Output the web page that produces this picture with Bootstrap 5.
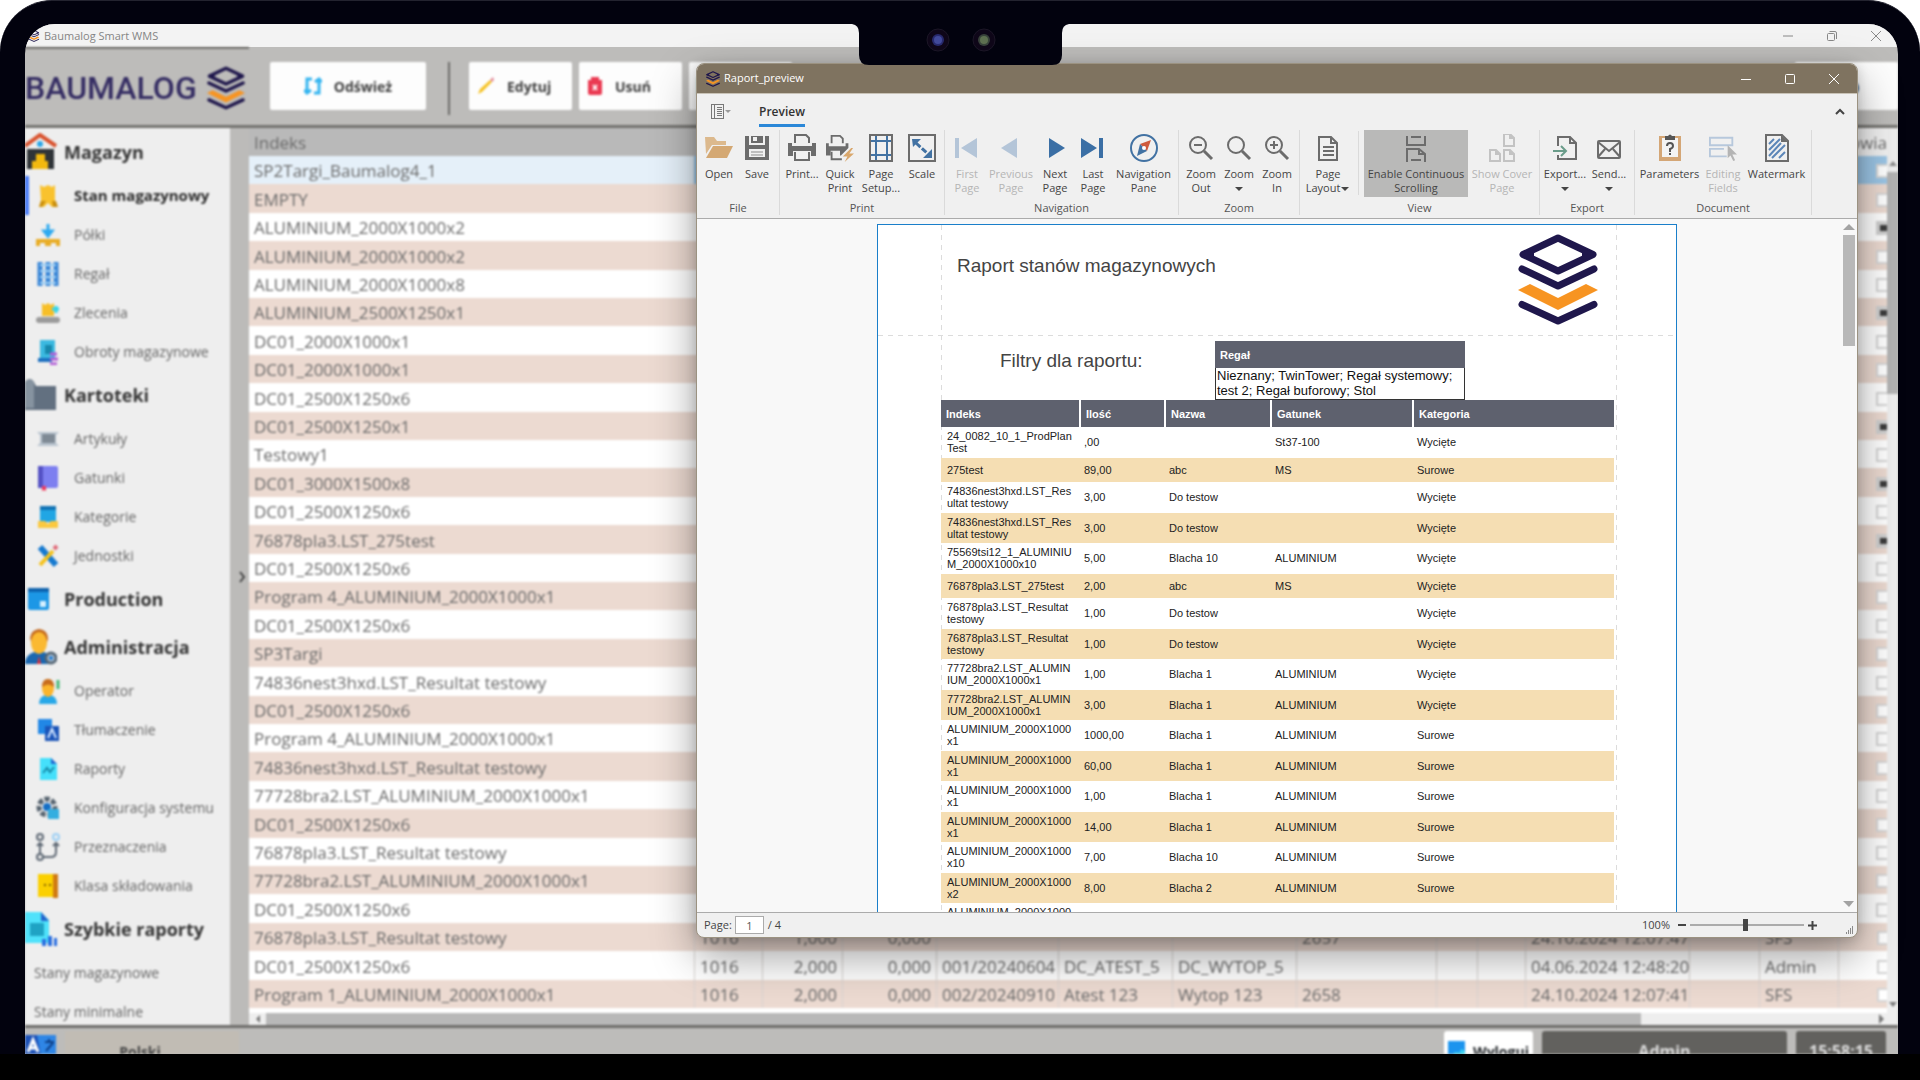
<!DOCTYPE html>
<html lang="pl">
<head>
<meta charset="utf-8">
<meta name="viewport" content="width=device-width, initial-scale=1">
<title>Baumalog Smart WMS</title>
<link href="https://cdn.jsdelivr.net/npm/bootstrap@5.3.0/dist/css/bootstrap.min.css" rel="stylesheet">
<style>
  :root { --ui: "Open Sans", "Noto Sans", sans-serif; --doc: "Liberation Sans", Arial, sans-serif; }
  body { font-family: var(--ui); background: #fff; }
  button { font-family: inherit; }
  svg { display: block; flex: none; }

  /* laptop frame */
  .device { background: #02020e; border-top: 1px solid #23232f; border-radius: 52px 52px 0 0; padding: 23px 22px 0 25px; min-height: 0; }
  .screen { background: #bdbcba; border-radius: 30px 30px 0 0; min-height: 0; }
  .deck { height: 26px; background: #000; }
  .notch { position: absolute; top: 20px; left: 852px; z-index: 20; }

  /* main application */
  .app-title { height: 23px; background: #f3f3f3; padding: 0 12px 0 3px; font-size: 11px; line-height: 23px; color: #858585; }
  .plain-btn { background: none; border: 0; padding: 0; color: inherit; }
  .app-body { filter: blur(1px); min-height: 0; color: #6b6b6b; }
  .app-head { height: 81px; padding: 15px 0; border-bottom: 3px solid #747370; }
  .brand-block { width: 224px; height: 79px; border-top: 2px solid #747370; margin-top: -15px; margin-right: 21px; gap: 10px; }
  .brand-word { font-family: Roboto, sans-serif; font-size: 32px; line-height: 40px; color: #352d63; font-weight: 500; }
  .tool-btn { background: #fdfdfd; border: 0; border-radius: 2px; height: 48px; width: 103px; color: #3d3d3d; font-size: 14px; font-weight: 700; margin-right: 7px; gap: 12px; }
  .tool-wide { width: 156px; margin-right: 22px; }
  .tool-rule { width: 2px; height: 53px; background: #6d6c6a; margin-right: 19px; }

  .side { width: 205px; background: #eee; flex: none; overflow: hidden; }
  .side-head { height: 48px; font-size: 18px; font-weight: 700; color: #353535; gap: 7px; }
  .side-link { height: 39px; padding-left: 11px; gap: 14px; font-size: 14px; color: #666; text-decoration: none; }
  .side-link.plain { padding-left: 9px; }
  .side-link.active { font-size: 15px; font-weight: 700; color: #2b2b2b; border-left: 4px solid #4a7dfa; padding-left: 7px; }
  .side a, .side-head { white-space: nowrap; }
  .splitter { width: 19px; background: #bcbbb9; flex: none; }

  .stock { table-layout: fixed; width: 100%; border-collapse: separate; border-spacing: 0; font-size: 17px; line-height: 26px; background: #fff; }
  .stock th, .stock td { padding: 2px 5px 0; white-space: nowrap; overflow: hidden; height: 28px; }
  .stock th { background: #b9b9b9; font-weight: 400; padding-top: 1px; }
  .stock tbody tr:nth-child(5n+2) td, .stock tbody tr:nth-child(5n+4) td { height: 29px; }
  .stock tbody tr:nth-child(even) td { background: #ecdad1; }
  .stock tbody tr:first-child td { background: #9cc6e6; }
  .stock tbody tr:first-child td:first-child { background: #e5f0f9; }
  .stock .lined td { border-left: 1px solid #d9d4d1; }
  .stock .lined td:first-child { border-left: 0; }
  .stock td.num { text-align: right; }
  .stock th.edge { background: #f1f1f1; text-align: right; padding-right: 0; }
  .stock td:last-child { padding-left: 38px; padding-right: 0; }
  .tick { appearance: none; width: 14px; height: 14px; border: 2px solid #d5d5d5; background: #fff; display: block; margin: 0; }
  .tick:checked { background: #3c3c3c; border: 4px solid #cfcfcf; border-right-width: 1px; }
  .vbar { width: 11px; background: #eee; flex: none; padding-top: 28px; }
  .vbar-thumb { height: 222px; background: #b3b3b3; }
  .hbar { height: 12px; background: #eee; margin-top: auto; }
  .hbar-thumb { background: #b8b8b8; width: 1375px; }
  .app-foot { height: 29px; border-top: 3px solid #6f6e6c; font-size: 14px; font-weight: 700; flex: none; overflow: hidden; gap: 9px; padding: 3px 12px 0 0; }
  .lang-pick { width: 174px; height: 40px; background: #c1bcb4; border: 0; color: #444; font-weight: 700; text-align: center; appearance: none; }
  .foot-tile { height: 40px; border: 0; border-radius: 3px; background: #62615e; color: #dcdcdc; font-weight: 700; font-size: 16px; }

  /* report preview window */
  .preview-win { position: absolute; left: 696px; right: 62px; top: 63px; bottom: 142px; z-index: 10; border: 1px solid #9b9281; border-radius: 8px; background: #f0f0f0; overflow: hidden; box-shadow: 0 18px 44px rgba(0,0,0,.38), 0 2px 12px rgba(0,0,0,.16); color: #454545; font-size: 11px; }
  .win-title { height: 30px; background: #7f7360; color: #fff; font-size: 11px; border-bottom: 1px solid #c8c2b6; padding: 0 17px 0 9px; }
  .win-tabs { height: 35px; padding: 0 12px 0 14px; }
  .tab-on { color: #333; font-size: 12px; font-weight: 600; line-height: 24px; border: 0; border-bottom: 3px solid #2b88d8; background: none; padding: 0; height: 27px; }
  .ribbon { height: 90px; border-bottom: 1px solid #ababab; }
  .r-group { border-right: 1px solid #dadada; height: 85px; padding: 0 3px; margin-top: 1px; }
  .r-name { line-height: 14px; margin-top: 4px; color: #555; }
  .r-btn { background: none; border: 0; padding: 4px 0 0; height: 67px; line-height: 14px; color: #454545; font-size: 11px; white-space: nowrap; display: flex; flex-direction: column; align-items: center; gap: 5px; }
  .r-btn svg.big { width: 28px; height: 28px; }
  .r-btn:disabled { color: #b5b5b5; }
  .r-btn.on { background: #b9b9b8; }
  .w-a { width: 38px; } .w-b { width: 44px; } .w-c { width: 50px; } .w-d { width: 63px; } .w-e { width: 68px; } .w-f { width: 104px; }
  .r-rule { width: 1px; height: 64px; background: #dadada; margin: 1px 5px 0; }
  .caret { display: inline-block; border: 4px solid transparent; border-top: 4px solid #454545; border-bottom: 0; vertical-align: middle; margin: 0 1px; }

  .canvas { background: #f8f8f8; padding-left: 14px; padding-top: 5px; min-height: 0; overflow: hidden; }
  .sheet { width: 800px; border: 1px solid #1a7fca; border-bottom: 0; font-family: var(--doc); color: #222; overflow: hidden; height: 100%;
    background:
      repeating-linear-gradient(180deg, #dcdcdc 0 5px, transparent 5px 10px) 63px 0 / 1px 100% no-repeat,
      repeating-linear-gradient(180deg, #dcdcdc 0 5px, transparent 5px 10px) 738px 0 / 1px 100% no-repeat,
      repeating-linear-gradient(90deg, #dcdcdc 0 5px, transparent 5px 10px) 0 110px / 100% 1px no-repeat #fff; }
  .sheet-head { height: 111px; padding: 9px 78px 0 79px; }
  .doc-title { font-size: 19px; line-height: 24px; margin: 0; font-weight: 400; color: #444; }
  .sheet-head .doc-title { padding-top: 20px; }
  .sheet-filter { padding: 5px 211px 0 122px; height: 64px; }
  .f-box { width: 250px; height: 59px; border: 1px solid #333; border-top: 0; font-size: 13px; color: #111; }
  .f-head { background: #5e616e; color: #fff; font-weight: 700; font-size: 11px; line-height: 28px; height: 27px; margin: 0 -1px; padding-left: 5px; }
  .f-box p { margin: 0; padding: 0 1px; line-height: 15px; white-space: nowrap; }
  .report { table-layout: fixed; width: 673px; margin-left: 63px; border-collapse: separate; border-spacing: 0; font-size: 11px; line-height: 12px; }
  .report th { background: #5e616e; color: #fff; height: 27px; padding: 0 5px; border-right: 2px solid #fff; }
  .report th:last-child { border-right: 0; }
  .report td { padding: 0 3px 1px; height: 31px; white-space: nowrap; }
  .report td:first-child { padding-left: 6px; }
  .report tbody tr:nth-child(even) td { height: 30px; background: #f5deb3; }
  .report tbody tr.slim td { height: 24px; }
  .canvas-bar { width: 14px; padding-right: 2px; }
  .canvas-thumb { height: 111px; background: #b8b8b8; }
  .status { height: 25px; border-top: 1px solid #ababab; padding: 0 3px 0 7px; font-size: 11px; flex: none; }
  .page-no { width: 29px; height: 18px; border: 1px solid #ababab; font-size: 11px; text-align: center; padding: 0; color: #555; margin: 0 4px 0 3px; }
  .zoomer { appearance: none; width: 114px; height: 14px; background: linear-gradient(#ababab, #ababab) center / 100% 2px no-repeat; margin: 0 4px; }
  .zoomer::-webkit-slider-thumb { appearance: none; width: 5px; height: 12px; background: #454545; }
</style>
<script src="https://cdn.jsdelivr.net/npm/bootstrap@5.3.0/dist/js/bootstrap.bundle.min.js"></script>
</head>
<body class="vh-100 overflow-hidden d-flex flex-column position-relative">

<svg width="0" height="0" class="position-absolute" aria-hidden="true">
  <symbol id="stack" viewBox="0 0 80 91">
    <g fill="none" stroke="#1f174c" stroke-width="7" stroke-linecap="round" stroke-linejoin="round">
      <path d="M40 4 75 20.500 40 37 5 20.500Z"/><path d="M4 35 40 52 76 35M4 70.500 40 87 76 70.500"/>
      <path d="M5 20.500 14 17V24ZM75 20.500 66 17V24Z" stroke-width="4"/>
    </g>
    <path fill="#f79422" d="M0 56 12 50 40 64 68 50 80 56 40 76Z"/>
  </symbol>
</svg>

<div class="device flex-fill d-flex flex-column">
  <div class="screen flex-fill d-flex flex-column overflow-hidden">

    <header class="app-title d-flex align-items-center">
      <svg width="12" height="12"><use href="#stack"/></svg>
      <span class="ms-1">Baumalog Smart WMS</span>
      <div class="ms-auto d-flex align-items-center gap-4 pe-1">
        <button class="plain-btn me-2" aria-label="Minimalizuj"><svg width="12" height="12"><path d="M1 6h10" stroke="#888"/></svg></button>
        <button class="plain-btn me-2" aria-label="Przywróć"><svg width="12" height="12" fill="none" stroke="#888"><rect x="1.500" y="3.500" width="7" height="7" rx="1"/><path d="M3.500 1.500H9q1.500 0 1.500 1.500v6"/></svg></button>
        <button class="plain-btn" aria-label="Zamknij"><svg width="12" height="12"><path d="M1 1l10 10M11 1 1 11" stroke="#888"/></svg></button>
      </div>
    </header>

    <div class="app-body flex-fill d-flex flex-column">
      <div class="app-head d-flex flex-shrink-0">
        <div class="brand-block d-flex align-items-center flex-shrink-0">
          <span class="brand-word">BAUMALOG</span>
          <svg width="38" height="44"><use href="#stack"/></svg>
        </div>
        <button class="tool-btn tool-wide d-flex align-items-center justify-content-center"><svg width="18" height="18" fill="none" stroke="#35b5f0" stroke-width="3"><path d="M8 2H3v13M10 16h5V3M0 13l3 3 4-3M11 5l4-3 3 3"/></svg>Odśwież</button>
        <div class="tool-rule"></div>
        <button class="tool-btn d-flex align-items-center ps-2"><svg width="18" height="20"><path d="M1 18 3 13 13 4l2 2L5 16Z" fill="#f6c325"/><path d="M13 4 16 1l1 3-2 2Z" fill="#e48a9a"/></svg>Edytuj</button>
        <button class="tool-btn d-flex align-items-center ps-2"><svg width="16" height="20"><path d="M1 4h14v13q0 2-2 2H3q-2 0-2-2ZM4 1h8v3H4Z" fill="#ea3a52"/><path d="M6 9l4 5M10 9l-4 5" stroke="#fff" stroke-width="2"/></svg>Usuń</button>
        <button class="tool-btn d-flex align-items-center ps-2" aria-label="Eksport"><svg width="18" height="20"><rect width="18" height="20" rx="3" fill="#3aa66a"/></svg></button>
        <button class="tool-btn ms-auto me-0 d-flex align-items-center justify-content-center" aria-label="Widok"><svg width="28" height="20"><circle cx="19" cy="12" r="7" fill="#3f5f80"/></svg></button>
      </div>

      <div class="flex-fill d-flex overflow-hidden">
        <nav class="side">
          <div class="side-head d-flex align-items-center"><svg width="32" height="38" viewBox="0 0 32 38"><path d="M0 13 15 2l16 11" fill="none" stroke="#d9532f" stroke-width="4"/><path d="M2 16h27v20H2Z" fill="#2f3438"/><circle cx="15" cy="11" r="3" fill="#2aa6e8"/><path d="M11 21h9v7h3v8H7v-8h4Z" fill="#f2b90f"/></svg>Magazyn</div>
          <a href="#" class="side-link active d-flex align-items-center"><svg width="24" height="24"><path d="M4 1l4 2 4-2 4 2 3-2v15l2 7h-5l-4-4-4 4H3l2-7Z" fill="#f9c22e"/><path d="M5 17h5l-4 6H3ZM16 17h4l2 6h-5Z" fill="#c98f10"/></svg>Stan magazynowy</a>
          <a href="#" class="side-link d-flex align-items-center"><svg width="24" height="24"><path d="M12 1v9M8 8l4 5 4-5Z" stroke="#2eaaf0" stroke-width="3" fill="#2eaaf0"/><path d="M0 16h24v7h-4v-3h-5v3H9v-3H4v3H0Z" fill="#e9ad25"/></svg>Półki</a>
          <a href="#" class="side-link d-flex align-items-center"><svg width="24" height="24"><path d="M4 0v24M12 0v24M20 0v24" stroke="#3a86d6" stroke-width="5"/><path d="M4 3h16M4 9h16M4 15h16M4 21h16" stroke="#9fd0f5" stroke-width="2"/></svg>Regał</a>
          <a href="#" class="side-link d-flex align-items-center"><svg width="24" height="24"><path d="M6 2l3 2 3-2 3 2 3-2v13H6Z" fill="#f7bf28"/><path d="M16 8h7M20 5v7" stroke="#35d5ea" stroke-width="3"/><rect y="16" width="24" height="6" rx="3" fill="#9b9b9b"/></svg>Zlecenia</a>
          <a href="#" class="side-link d-flex align-items-center"><svg width="24" height="26"><path d="M4 1h15v20H4Z" fill="#3bb9e0"/><path d="M9 6h7v9H9Z" fill="#1788ac"/><path d="M2 19h14v4H2Z" fill="#1b6fc0"/><path d="M14 15h7M14 20h8M14 25h7" stroke="#b25bd6" stroke-width="3"/></svg>Obroty magazynowe</a>
          <div class="side-head d-flex align-items-center"><svg width="32" height="38" viewBox="0 0 32 38"><path d="M0 6q5-6 9 0l2 4h20v24H0Z" fill="#627080"/><path d="M0 6q5-6 9 0v26H0Z" fill="#8693a0"/></svg>Kartoteki</div>
          <a href="#" class="side-link d-flex align-items-center"><svg width="24" height="24"><path d="M1 5h22l-3 3v8l3 3H1l3-3V8Z" fill="#b9c4cf"/><rect x="6" y="7" width="13" height="9" fill="#7f8a95"/></svg>Artykuły</a>
          <a href="#" class="side-link d-flex align-items-center"><svg width="24" height="26"><rect x="2" y="1" width="20" height="22" rx="2" fill="#7d7ff0"/><rect x="2" y="1" width="5" height="22" fill="#5451c4"/><path d="M6 21h4v5l-2-1-2 1Z" fill="#ee3a5e"/></svg>Gatunki</a>
          <a href="#" class="side-link d-flex align-items-center"><svg width="24" height="24"><path d="M4 1h16v16H4Z" fill="#21a6e4"/><path d="M4 1h16v4H4Z" fill="#1173b5"/><path d="M2 16h7l3 3 3-3h7v7H2Z" fill="#fbc93f"/></svg>Kategorie</a>
          <a href="#" class="side-link d-flex align-items-center"><svg width="24" height="24"><path d="M4 3l16 18" stroke="#167ad0" stroke-width="6"/><path d="M4 21 17 7" stroke="#f5c21c" stroke-width="4"/><path d="M18 5l3-3" stroke="#e06a78" stroke-width="4"/></svg>Jednostki</a>
          <div class="side-head d-flex align-items-center"><svg width="32" height="26" viewBox="0 0 32 26"><rect x="3" y="2" width="21" height="22" rx="2" fill="#1c97e6"/><path d="M3 2h21v4H3Z" fill="#0d62ae"/><rect x="15" y="15" width="6" height="6" fill="#d6f0ff"/></svg>Production</div>
          <div class="side-head d-flex align-items-center"><svg width="32" height="38" viewBox="0 0 32 38"><path d="M0 36q0-11 14-13 12 1 14 13Z" fill="#1a67b0"/><path d="M5 10Q6 2 14 1q9 1 9 10l-2 6H7Z" fill="#c4691d"/><ellipse cx="14" cy="15" rx="8" ry="11" fill="#fbb930"/><path d="M14 28l2 8h-4Z" fill="#e0303a"/><circle cx="26" cy="30" r="5" fill="#b8c9da" stroke="#556675" stroke-width="3"/><circle cx="26" cy="30" r="2" fill="#1a77d0"/></svg>Administracja</div>
          <a href="#" class="side-link d-flex align-items-center"><svg width="24" height="26"><path d="M3 26q0-9 9-9t9 9Z" fill="#28a8e8"/><ellipse cx="12" cy="10" rx="6" ry="9" fill="#fbb52c"/><path d="M6 9q0-8 6-8t6 8q-6-5-12 0Z" fill="#c76c1d"/><path d="M22 2v9" stroke="#48b978" stroke-width="3"/></svg>Operator</a>
          <a href="#" class="side-link d-flex align-items-center"><svg width="24" height="24"><rect x="2" y="1" width="14" height="15" fill="#2187e6"/><rect x="9" y="8" width="14" height="15" fill="#1a54b8"/><path d="M12 20l4-9 4 9" stroke="#cfe4ff" stroke-width="2" fill="none"/></svg>Tłumaczenie</a>
          <a href="#" class="side-link d-flex align-items-center"><svg width="24" height="24"><path d="M4 1h11l6 6v16H4Z" fill="#45e0fb"/><path d="M15 1l6 6h-6Z" fill="#1f66d0"/><path d="M7 16l4-5 3 4 4-5" stroke="#178aa8" stroke-width="2" fill="none"/></svg>Raporty</a>
          <a href="#" class="side-link d-flex align-items-center"><svg width="24" height="24"><circle cx="11" cy="11" r="8" fill="none" stroke="#56636f" stroke-width="5" stroke-dasharray="5 2"/><circle cx="11" cy="11" r="4" fill="#156ec4"/><rect x="12" y="13" width="11" height="10" fill="#33aee0"/></svg>Konfiguracja systemu</a>
          <a href="#" class="side-link d-flex align-items-center"><svg width="24" height="28" fill="none" stroke="#5f6975" stroke-width="2"><circle cx="4" cy="4" r="3"/><circle cx="20" cy="4" r="3" stroke="#9ccff5"/><circle cx="4" cy="24" r="3"/><path d="M4 21V10M1 13l3-3 3 3M7 24h8q5 0 5-5v-9M17 13l3-3 3 3"/></svg>Przeznaczenia</a>
          <a href="#" class="side-link d-flex align-items-center"><svg width="24" height="24"><rect x="2" width="15" height="23" fill="#fbd000"/><path d="M17 0h5v24h-5Z" fill="#d07a12"/><path d="M8 11h2M13 11h2" stroke="#7a5a00" stroke-width="2"/></svg>Klasa składowania</a>
          <div class="side-head d-flex align-items-center"><svg width="32" height="36" viewBox="0 0 32 36"><path d="M0 1h16l8 8v23H0Z" fill="#4fe2fb"/><path d="M16 1l8 9h-8Z" fill="#2264cc"/><path d="M5 12h14v13H5Z" fill="#1fa3c4"/><path d="M19 35v-7M25 35V25M31 35v-8" stroke="#2b6fe0" stroke-width="4"/></svg>Szybkie raporty</div>
          <a href="#" class="side-link plain d-flex align-items-center">Stany magazynowe</a>
          <a href="#" class="side-link plain d-flex align-items-center">Stany minimalne</a>
        </nav>
        <div class="splitter d-flex align-items-center justify-content-center"><svg width="8" height="12" class="ms-1"><path d="M2 1l4 5-4 5" fill="none" stroke="#444" stroke-width="2"/></svg></div>

        <div class="flex-fill d-flex flex-column overflow-hidden bg-white">
          <div class="d-flex flex-fill overflow-hidden">
            <div class="flex-fill overflow-hidden">
              <table class="stock">
                <colgroup><col><col style="width:68px"><col style="width:80px"><col style="width:94px"><col style="width:122px"><col style="width:114px"><col style="width:124px"><col style="width:140px"><col style="width:41px"><col style="width:48px"><col style="width:164px"><col style="width:70px"><col style="width:79px"><col style="width:49px"></colgroup>
                <thead><tr><th>Indeks</th><th colspan="12"></th><th class="edge">owia</th></tr></thead>
                <tbody>
                  <tr><td>SP2Targi_Baumalog4_1</td><td colspan="12"></td><td><input type="checkbox" class="tick" aria-label="Wiersz 1"></td></tr>
                  <tr><td>EMPTY</td><td colspan="12"></td><td><input type="checkbox" class="tick" aria-label="Wiersz 2"></td></tr>
                  <tr><td>ALUMINIUM_2000X1000x2</td><td colspan="12"></td><td><input type="checkbox" class="tick" checked aria-label="Wiersz 3"></td></tr>
                  <tr><td>ALUMINIUM_2000X1000x2</td><td colspan="12"></td><td><input type="checkbox" class="tick" aria-label="Wiersz 4"></td></tr>
                  <tr><td>ALUMINIUM_2000X1000x8</td><td colspan="12"></td><td><input type="checkbox" class="tick" aria-label="Wiersz 5"></td></tr>
                  <tr><td>ALUMINIUM_2500X1250x1</td><td colspan="12"></td><td><input type="checkbox" class="tick" checked aria-label="Wiersz 6"></td></tr>
                  <tr><td>DC01_2000X1000x1</td><td colspan="12"></td><td><input type="checkbox" class="tick" aria-label="Wiersz 7"></td></tr>
                  <tr><td>DC01_2000X1000x1</td><td colspan="12"></td><td><input type="checkbox" class="tick" aria-label="Wiersz 8"></td></tr>
                  <tr><td>DC01_2500X1250x6</td><td colspan="12"></td><td><input type="checkbox" class="tick" aria-label="Wiersz 9"></td></tr>
                  <tr><td>DC01_2500X1250x1</td><td colspan="12"></td><td><input type="checkbox" class="tick" checked aria-label="Wiersz 10"></td></tr>
                  <tr><td>Testowy1</td><td colspan="12"></td><td><input type="checkbox" class="tick" aria-label="Wiersz 11"></td></tr>
                  <tr><td>DC01_3000X1500x8</td><td colspan="12"></td><td><input type="checkbox" class="tick" checked aria-label="Wiersz 12"></td></tr>
                  <tr><td>DC01_2500X1250x6</td><td colspan="12"></td><td><input type="checkbox" class="tick" aria-label="Wiersz 13"></td></tr>
                  <tr><td>76878pla3.LST_275test</td><td colspan="12"></td><td><input type="checkbox" class="tick" checked aria-label="Wiersz 14"></td></tr>
                  <tr><td>DC01_2500X1250x6</td><td colspan="12"></td><td><input type="checkbox" class="tick" aria-label="Wiersz 15"></td></tr>
                  <tr><td>Program 4_ALUMINIUM_2000X1000x1</td><td colspan="12"></td><td><input type="checkbox" class="tick" aria-label="Wiersz 16"></td></tr>
                  <tr><td>DC01_2500X1250x6</td><td colspan="12"></td><td><input type="checkbox" class="tick" aria-label="Wiersz 17"></td></tr>
                  <tr><td>SP3Targi</td><td colspan="12"></td><td><input type="checkbox" class="tick" aria-label="Wiersz 18"></td></tr>
                  <tr><td>74836nest3hxd.LST_Resultat testowy</td><td colspan="12"></td><td><input type="checkbox" class="tick" aria-label="Wiersz 19"></td></tr>
                  <tr><td>DC01_2500X1250x6</td><td colspan="12"></td><td><input type="checkbox" class="tick" aria-label="Wiersz 20"></td></tr>
                  <tr><td>Program 4_ALUMINIUM_2000X1000x1</td><td colspan="12"></td><td><input type="checkbox" class="tick" aria-label="Wiersz 21"></td></tr>
                  <tr><td>74836nest3hxd.LST_Resultat testowy</td><td colspan="12"></td><td><input type="checkbox" class="tick" aria-label="Wiersz 22"></td></tr>
                  <tr><td>77728bra2.LST_ALUMINIUM_2000X1000x1</td><td colspan="12"></td><td><input type="checkbox" class="tick" aria-label="Wiersz 23"></td></tr>
                  <tr><td>DC01_2500X1250x6</td><td colspan="12"></td><td><input type="checkbox" class="tick" aria-label="Wiersz 24"></td></tr>
                  <tr><td>76878pla3.LST_Resultat testowy</td><td colspan="12"></td><td><input type="checkbox" class="tick" aria-label="Wiersz 25"></td></tr>
                  <tr><td>77728bra2.LST_ALUMINIUM_2000X1000x1</td><td colspan="12"></td><td><input type="checkbox" class="tick" aria-label="Wiersz 26"></td></tr>
                  <tr><td>DC01_2500X1250x6</td><td colspan="12"></td><td><input type="checkbox" class="tick" aria-label="Wiersz 27"></td></tr>
                  <tr class="lined"><td>76878pla3.LST_Resultat testowy</td><td>1016</td><td class="num">1,000</td><td class="num">0,000</td><td></td><td></td><td></td><td>2657</td><td></td><td></td><td>24.10.2024 12:07:47</td><td></td><td>SFS</td><td><input type="checkbox" class="tick" aria-label="Wiersz 28"></td></tr>
                  <tr class="lined"><td>DC01_2500X1250x6</td><td>1016</td><td class="num">2,000</td><td class="num">0,000</td><td>001/20240604</td><td>DC_ATEST_5</td><td>DC_WYTOP_5</td><td></td><td></td><td></td><td>04.06.2024 12:48:20</td><td></td><td>Admin</td><td><input type="checkbox" class="tick" aria-label="Wiersz 29"></td></tr>
                  <tr class="lined"><td>Program 1_ALUMINIUM_2000X1000x1</td><td>1016</td><td class="num">2,000</td><td class="num">0,000</td><td>002/20240910</td><td>Atest 123</td><td>Wytop 123</td><td>2658</td><td></td><td></td><td>24.10.2024 12:07:41</td><td></td><td>SFS</td><td><input type="checkbox" class="tick" aria-label="Wiersz 30"></td></tr>
                </tbody>
              </table>
            </div>
            <div class="vbar d-flex flex-column">
              <svg width="11" height="16"><path d="M2 10 6 5l4 5Z" fill="#888"/></svg>
              <div class="vbar-thumb"></div>
              <svg width="11" height="16" class="mt-auto"><path d="M2 5 6 10l4-5Z" fill="#777"/></svg>
            </div>
          </div>
          <div class="hbar d-flex flex-shrink-0">
            <svg width="17" height="12"><path d="M11 2 7 6l4 4Z" fill="#777"/></svg>
            <div class="hbar-thumb"></div>
            <svg width="24" height="12" class="ms-auto"><path d="M5 1l5 5-5 5Z" fill="#777"/></svg>
          </div>
        </div>
      </div>

      <footer class="app-foot d-flex">
        <svg width="31" height="32" class="mt-1"><rect width="31" height="32" fill="#2f86e6"/><path d="M0 0h12l6 32H0Z" fill="#1d52b8"/><path d="M3 17 8 5l5 12M5 13h6" fill="none" stroke="#fff" stroke-width="3"/><path d="M20 7h9M24 4v4M21 16l7-8" stroke="#0d3f87" stroke-width="2"/></svg>
        <select class="lang-pick flex-shrink-0 pe-4" aria-label="Język"><option>Polski</option></select>
        <button class="foot-tile ms-auto d-flex align-items-center justify-content-center gap-2 bg-white text-dark" style="width:89px"><svg width="17" height="20"><rect width="17" height="20" fill="#1c94ee"/><path d="M6 13h11M13 9l4 4-4 4" stroke="#3fdcf5" stroke-width="3" fill="none"/></svg><small>Wyloguj</small></button>
        <button class="foot-tile" style="width:245px">Admin</button>
        <div class="foot-tile d-flex align-items-center justify-content-center" style="width:90px">15:58:15</div>
      </footer>
    </div>
  </div>
</div>
<div class="deck"></div>

<svg class="notch" width="217" height="46" viewBox="0 0 217 46" aria-hidden="true">
  <path d="M0 4q7 1 7 9v22q0 10 10 10h183q10 0 10-10V13q0-8 7-9V0H0Z" fill="#02020e"/>
  <circle cx="86" cy="20" r="11" fill="#0e0618" stroke="#1b1626"/><circle cx="86" cy="20" r="6" fill="#27296c"/><circle cx="86" cy="20" r="4" fill="#41499a"/>
  <circle cx="132" cy="20" r="11" fill="#0e0618" stroke="#1b1626"/><circle cx="132" cy="20" r="6" fill="#37413a"/><circle cx="132" cy="20" r="4" fill="#5d6f50"/>
</svg>

<section class="preview-win d-flex flex-column" aria-label="Raport_preview">
  <div class="win-title d-flex align-items-center flex-shrink-0">
    <svg width="14" height="16"><use href="#stack"/></svg>
    <span class="ms-1">Raport_preview</span>
    <div class="ms-auto d-flex align-items-center gap-4">
      <button class="plain-btn me-2" aria-label="Minimize"><svg width="12" height="12"><path d="M1 6.500h10" stroke="#fff"/></svg></button>
      <button class="plain-btn me-2" aria-label="Maximize"><svg width="12" height="12"><rect x="1.500" y="1.500" width="9" height="9" rx="1" fill="none" stroke="#fff"/></svg></button>
      <button class="plain-btn" aria-label="Close"><svg width="12" height="12"><path d="M1 1l10 10M11 1 1 11" stroke="#fff"/></svg></button>
    </div>
  </div>

  <div class="win-tabs d-flex align-items-center flex-shrink-0">
    <button class="plain-btn me-4" aria-label="Menu"><svg width="20" height="15"><g fill="none" stroke="#777"><rect x=".5" y=".5" width="12" height="14"/><path d="M3.500 0v15M6 3.500h5M6 5.500h5M6 7.500h5M6 9.500h5M6 11.500h5"/></g><path d="M14 6h6l-3 3Z" fill="#999"/></svg></button>
    <button class="tab-on ms-1 mt-1">Preview</button>
    <button class="plain-btn ms-auto" aria-label="Zwiń"><svg width="10" height="7"><path d="M1 6l4-4 4 4" fill="none" stroke="#444" stroke-width="2"/></svg></button>
  </div>

  <div class="ribbon d-flex flex-shrink-0">
    <div class="r-group text-center">
      <div class="d-flex">
        <button class="r-btn w-a"><svg class="big" viewBox="0 0 28 28"><path d="M0 3h9l3 4h9v4H7L1 20Z" fill="#dcb98d"/><path d="M8 12h20l-6 12H1Z" fill="#d4a873"/></svg>Open</button>
        <button class="r-btn w-a"><svg class="big" viewBox="0 0 28 28"><path d="M2 2h4v9h16V2h4v24H2Zm4 13v8h16v-8Z" fill="#6c6c6c" fill-rule="evenodd"/><path d="M8 2h12v7H8Zm2 1v4h4V3Z" fill="#6c6c6c" fill-rule="evenodd"/><path d="M8 18h12M8 21h12" stroke="#8b8b8b"/></svg>Save</button>
      </div>
      <div class="r-name">File</div>
    </div>
    <div class="r-group text-center">
      <div class="d-flex">
        <button class="r-btn w-a"><svg class="big" viewBox="0 0 28 28"><path d="M7 9V1h11l3 3v5" fill="none" stroke="#6c6c6c" stroke-width="2"/><path d="M0 9h4v3h20V9h4v13h-5v-5H5v5H0Z" fill="#6c6c6c"/><path d="M7 18v8h14v-8" fill="none" stroke="#6c6c6c" stroke-width="2"/></svg>Print...</button>
        <button class="r-btn w-a"><svg class="big" viewBox="0 0 30 28"><path d="M6 9V1h9l3 3v5" fill="none" stroke="#6c6c6c" stroke-width="2"/><path d="M0 9h3v3h18V9h3v5l-8 8h-1v-5H5v5H0Z" fill="#6c6c6c"/><path d="M6 18v8h11" fill="none" stroke="#6c6c6c" stroke-width="2"/><path d="M27 14l-9 9h5l-3 6 10-9h-5l4-6Z" fill="#d9a76c"/></svg>Quick<br>Print</button>
        <button class="r-btn w-b"><svg class="big" viewBox="0 0 28 28"><path d="M9 2v24M20 2v24M3 7h22M3 21h22" stroke="#4272a3" stroke-width="2"/><rect x="3" y="1" width="22" height="26" fill="none" stroke="#6c6c6c" stroke-width="2"/></svg>Page<br>Setup...</button>
        <button class="r-btn w-a"><svg class="big" viewBox="0 0 28 28"><rect x="1" y="1" width="26" height="26" fill="none" stroke="#6c6c6c" stroke-width="2"/><path d="M4 5h9L5 13ZM24 24h-9l9-9Z" fill="#4272a3"/><path d="M8 9l12 11" stroke="#4272a3" stroke-width="3" stroke-dasharray="6 2"/></svg>Scale</button>
      </div>
      <div class="r-name">Print</div>
    </div>
    <div class="r-group text-center">
      <div class="d-flex">
        <button class="r-btn w-a" disabled><svg class="big" viewBox="0 0 28 28"><path d="M2 4h4v20H2ZM24 4v20L8 14Z" fill="#b4c5d8"/></svg>First<br>Page</button>
        <button class="r-btn w-c" disabled><svg class="big" viewBox="0 0 28 28"><path d="M20 4v20L4 14Z" fill="#b4c5d8"/></svg>Previous<br>Page</button>
        <button class="r-btn w-a"><svg class="big" viewBox="0 0 28 28"><path d="M8 4v20l16-10Z" fill="#3b6fa5"/></svg>Next<br>Page</button>
        <button class="r-btn w-a"><svg class="big" viewBox="0 0 28 28"><path d="M2 4v20l16-10ZM20 4h4v20h-4Z" fill="#3b6fa5"/></svg>Last<br>Page</button>
        <button class="r-btn w-d"><svg class="big" viewBox="0 0 28 28"><circle cx="14" cy="14" r="13" fill="none" stroke="#4272a3" stroke-width="2"/><path d="M21 6 17 17 10 10Z" fill="#cf5b3d"/><path d="M7 22 10 10 17 17Z" fill="#4272a3"/><circle cx="14" cy="14" r="2" fill="#fff"/></svg>Navigation<br>Pane</button>
      </div>
      <div class="r-name">Navigation</div>
    </div>
    <div class="r-group text-center">
      <div class="d-flex">
        <button class="r-btn w-a"><svg class="big" viewBox="0 0 28 28"><circle cx="11" cy="11" r="8" fill="none" stroke="#6c6c6c" stroke-width="2"/><path d="M7 11h8" stroke="#6c6c6c" stroke-width="2"/><path d="M17 17l8 8" stroke="#6c6c6c" stroke-width="3"/></svg>Zoom<br>Out</button>
        <button class="r-btn w-a"><svg class="big" viewBox="0 0 28 28"><circle cx="11" cy="11" r="8" fill="none" stroke="#6c6c6c" stroke-width="2"/><path d="M17 17l8 8" stroke="#6c6c6c" stroke-width="3"/></svg><span>Zoom<br><span class="caret"></span></span></button>
        <button class="r-btn w-a"><svg class="big" viewBox="0 0 28 28"><circle cx="11" cy="11" r="8" fill="none" stroke="#6c6c6c" stroke-width="2"/><path d="M7 11h8M11 7v8" stroke="#6c6c6c" stroke-width="2"/><path d="M17 17l8 8" stroke="#6c6c6c" stroke-width="3"/></svg>Zoom<br>In</button>
      </div>
      <div class="r-name">Zoom</div>
    </div>
    <div class="r-group text-center">
      <div class="d-flex">
        <button class="r-btn w-c"><svg class="big" viewBox="0 0 28 28" fill="none" stroke="#6c6c6c" stroke-width="2"><path d="M5 3h12l6 6v17H5ZM17 3v6h6"/><path d="M9 13h11M9 17h11M9 21h11" stroke-width="2"/></svg><span>Page<br>Layout<span class="caret"></span></span></button>
        <div class="r-rule"></div>
        <button class="r-btn w-f on"><svg class="big" viewBox="0 0 28 28" fill="none" stroke="#6c6c6c" stroke-width="2"><path d="M5 2v9h18V2M9 3h10M5 28V15h12l6 5v8M17 15v5h6M9 26h10"/></svg>Enable Continuous<br>Scrolling</button>
        <button class="r-btn w-e" disabled><svg class="big" viewBox="0 0 28 28" fill="none" stroke="#c3c3c3" stroke-width="2"><path d="M16 0h6l4 4v8H16ZM2 16h6l4 4v7H2ZM16 16h6l4 4v7H16ZM22 0v4h4M8 16v4h4M22 16v4h4"/></svg>Show Cover<br>Page</button>
      </div>
      <div class="r-name">View</div>
    </div>
    <div class="r-group text-center">
      <div class="d-flex">
        <button class="r-btn w-b"><svg class="big" viewBox="0 0 28 28" fill="none" stroke="#6c6c6c" stroke-width="2"><path d="M7 12V3h12l6 6v16H7v-4M19 3v6h6"/><path d="M2 17h12M10 12l5 5-5 5" stroke="#6a9c8a"/></svg><span>Export...<br><span class="caret"></span></span></button>
        <button class="r-btn w-b"><svg class="big" viewBox="0 0 28 28" fill="none" stroke="#6c6c6c" stroke-width="2"><rect x="3" y="7" width="22" height="17" rx="1"/><path d="M3 8l11 9L25 8M3 23l7-8M25 23l-7-8"/></svg><span>Send...<br><span class="caret"></span></span></button>
      </div>
      <div class="r-name">Export</div>
    </div>
    <div class="r-group text-center">
      <div class="d-flex">
        <button class="r-btn w-d"><svg class="big" viewBox="0 0 28 28"><path d="M3 2h22v25H3Zm3 3v18h16V5Z" fill="#d4a676" fill-rule="evenodd"/><path d="M6 4h16v19H6Z" fill="#f4f4f4"/><path d="M9 2h3q2-3 4 0h3v4H9Z" fill="#555"/><path d="M11 12q0-3 3-3t3 3q0 2-3 3v3M14 19v2" fill="none" stroke="#555" stroke-width="2"/></svg>Parameters</button>
        <button class="r-btn w-b" disabled><svg class="big" viewBox="0 0 30 28"><path d="M1 3h24v8H1ZM16 15H1v8h18" fill="none" stroke="#b7c8dc" stroke-width="2"/><path d="M20 11v14l3-3 3 6 2-1-3-6h5Z" fill="#b4b4b4"/></svg>Editing<br>Fields</button>
        <button class="r-btn w-d"><svg class="big" viewBox="0 0 28 28"><path d="M6 10l5-5M6 16 17 5M6 22 18 9M9 24 22 11M16 24l6-6" stroke="#5c86b8" stroke-width="2"/><path d="M3 1h16l6 6v20H3Z" fill="none" stroke="#6c6c6c" stroke-width="2"/><path d="M18 1l7 7h-7Z" fill="#6c6c6c"/></svg>Watermark</button>
      </div>
      <div class="r-name">Document</div>
    </div>
  </div>

  <div class="canvas flex-fill d-flex">
    <div class="flex-fill d-flex justify-content-center">
      <article class="sheet">
        <div class="sheet-head d-flex justify-content-between">
          <h1 class="doc-title">Raport stanów magazynowych</h1>
          <svg width="80" height="91"><use href="#stack"/></svg>
        </div>
        <div class="sheet-filter d-flex justify-content-between">
          <h2 class="doc-title mt-2">Filtry dla raportu:</h2>
          <div class="f-box"><div class="f-head">Regał</div><p>Nieznany; TwinTower; Regał systemowy;<br>test 2; Regał buforowy; Stol</p></div>
        </div>
        <table class="report">
          <colgroup><col style="width:140px"><col style="width:85px"><col style="width:106px"><col style="width:142px"><col style="width:200px"></colgroup>
          <thead><tr><th>Indeks</th><th>Ilość</th><th>Nazwa</th><th>Gatunek</th><th>Kategoria</th></tr></thead>
          <tbody>
            <tr><td>24_0082_10_1_ProdPlan<br>Test</td><td>,00</td><td></td><td>St37-100</td><td>Wycięte</td></tr>
            <tr class="slim"><td>275test</td><td>89,00</td><td>abc</td><td>MS</td><td>Surowe</td></tr>
            <tr><td>74836nest3hxd.LST_Res<br>ultat testowy</td><td>3,00</td><td>Do testow</td><td></td><td>Wycięte</td></tr>
            <tr><td>74836nest3hxd.LST_Res<br>ultat testowy</td><td>3,00</td><td>Do testow</td><td></td><td>Wycięte</td></tr>
            <tr><td>75569tsi12_1_ALUMINIU<br>M_2000X1000x10</td><td>5,00</td><td>Blacha 10</td><td>ALUMINIUM</td><td>Wycięte</td></tr>
            <tr class="slim"><td>76878pla3.LST_275test</td><td>2,00</td><td>abc</td><td>MS</td><td>Wycięte</td></tr>
            <tr><td>76878pla3.LST_Resultat<br>testowy</td><td>1,00</td><td>Do testow</td><td></td><td>Wycięte</td></tr>
            <tr><td>76878pla3.LST_Resultat<br>testowy</td><td>1,00</td><td>Do testow</td><td></td><td>Wycięte</td></tr>
            <tr><td>77728bra2.LST_ALUMIN<br>IUM_2000X1000x1</td><td>1,00</td><td>Blacha 1</td><td>ALUMINIUM</td><td>Wycięte</td></tr>
            <tr><td>77728bra2.LST_ALUMIN<br>IUM_2000X1000x1</td><td>3,00</td><td>Blacha 1</td><td>ALUMINIUM</td><td>Wycięte</td></tr>
            <tr><td>ALUMINIUM_2000X1000<br>x1</td><td>1000,00</td><td>Blacha 1</td><td>ALUMINIUM</td><td>Surowe</td></tr>
            <tr><td>ALUMINIUM_2000X1000<br>x1</td><td>60,00</td><td>Blacha 1</td><td>ALUMINIUM</td><td>Surowe</td></tr>
            <tr><td>ALUMINIUM_2000X1000<br>x1</td><td>1,00</td><td>Blacha 1</td><td>ALUMINIUM</td><td>Surowe</td></tr>
            <tr><td>ALUMINIUM_2000X1000<br>x1</td><td>14,00</td><td>Blacha 1</td><td>ALUMINIUM</td><td>Surowe</td></tr>
            <tr><td>ALUMINIUM_2000X1000<br>x10</td><td>7,00</td><td>Blacha 10</td><td>ALUMINIUM</td><td>Surowe</td></tr>
            <tr><td>ALUMINIUM_2000X1000<br>x2</td><td>8,00</td><td>Blacha 2</td><td>ALUMINIUM</td><td>Surowe</td></tr>
            <tr><td>ALUMINIUM_2000X1000<br>x2</td><td></td><td></td><td></td><td></td></tr>
          </tbody>
        </table>
      </article>
    </div>
    <div class="canvas-bar d-flex flex-column">
      <svg width="12" height="11"><path d="M0 6 6 0l6 6Z" fill="#a3a3a3"/></svg>
      <div class="canvas-thumb"></div>
      <svg width="12" height="14" class="mt-auto"><path d="M0 3h11L6 9Z" fill="#a3a3a3"/></svg>
    </div>
  </div>

  <div class="status d-flex align-items-center">
    <label for="pageNo">Page:</label><input id="pageNo" class="page-no" type="text" value="1"><span>/ 4</span>
    <label for="zoomLevel" class="ms-auto">100%</label>
    <button class="plain-btn ms-2" aria-label="Zoom out"><svg width="8" height="8"><path d="M0 4h8" stroke="#444" stroke-width="2"/></svg></button>
    <input id="zoomLevel" class="zoomer" type="range" min="0" max="200" value="97">
    <button class="plain-btn me-1" aria-label="Zoom in"><svg width="9" height="9"><path d="M0 4.500h9M4.500 0v9" stroke="#444" stroke-width="2"/></svg></button>
    <svg width="9" height="9" class="ms-4 mt-2" stroke="#8b8b8b"><path d="M7.500 1v8M5.500 3v6M3.500 5v4M1.500 7v2"/></svg>
  </div>
</section>
</body>
</html>
